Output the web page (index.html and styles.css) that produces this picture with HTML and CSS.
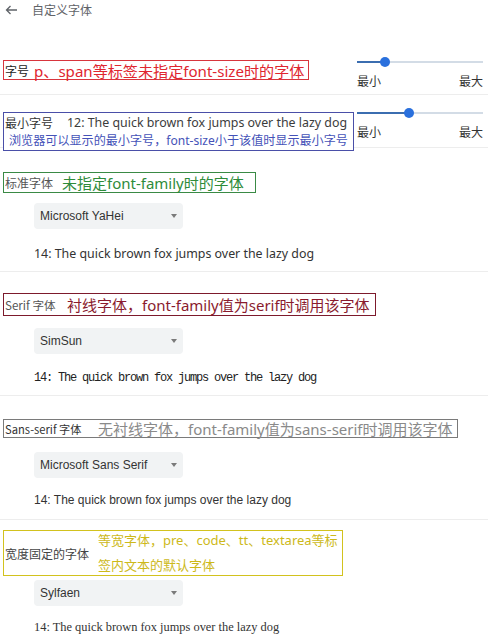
FILE: index.html
```html
<!DOCTYPE html>
<html lang="zh-CN">
<head>
<meta charset="utf-8">
<title>自定义字体</title>
<link rel="stylesheet" href="styles.css">
</head>
<body>
<div class="page">
  <header class="topbar">
    <svg class="back" width="14" height="12" viewBox="0 0 14 12"><path d="M13 6H2.5M6.5 2L2.5 6L6.5 10" fill="none" stroke="#5f6368" stroke-width="1.3"/></svg>
    <span class="title">自定义字体</span>
  </header>

  <section class="row row-size">
    <div class="note note-red">
      <span class="lbl lbl-1">字号</span><span class="desc">p、span等标签未指定font-size时的字体</span>
    </div>
    <div class="slider slider-1">
      <div class="track"><div class="fill" style="width:28px"><span class="knob"></span></div></div>
      <div class="ends"><span>最小</span><span>最大</span></div>
    </div>
  </section>

  <section class="row row-min">
    <div class="note note-blue">
      <div class="line1"><span class="lbl lbl-2">最小字号</span><span class="sample12">12: The quick brown fox jumps over the lazy dog</span></div>
      <div class="line2">浏览器可以显示的最小字号，font-size小于该值时显示最小字号</div>
    </div>
    <div class="slider slider-2">
      <div class="track"><div class="fill" style="width:52px"><span class="knob"></span></div></div>
      <div class="ends"><span>最小</span><span>最大</span></div>
    </div>
  </section>

  <section class="row font-row row-std">
    <div class="note note-green">
      <span class="lbl lbl-3">标准字体</span><span class="desc">未指定font-family时的字体</span>
    </div>
    <div class="select"><span>Microsoft YaHei</span><span class="caret"></span></div>
    <p class="sample sample-yahei">14: The quick brown fox jumps over the lazy dog</p>
  </section>

  <section class="row font-row row-serif">
    <div class="note note-maroon">
      <span class="lbl lbl-4">Serif 字体</span><span class="desc">衬线字体，font-family值为serif时调用该字体</span>
    </div>
    <div class="select"><span>SimSun</span><span class="caret"></span></div>
    <p class="sample sample-simsun">14: The quick brown fox jumps over the lazy dog</p>
  </section>

  <section class="row font-row row-sans">
    <div class="note note-gray">
      <span class="lbl lbl-5">Sans-serif 字体</span><span class="desc">无衬线字体，font-family值为sans-serif时调用该字体</span>
    </div>
    <div class="select"><span>Microsoft Sans Serif</span><span class="caret"></span></div>
    <p class="sample sample-arial">14: The quick brown fox jumps over the lazy dog</p>
  </section>

  <section class="row font-row row-mono">
    <div class="note note-yellow">
      <span class="lbl lbl-6">宽度固定的字体</span><span class="desc">等宽字体，pre、code、tt、textarea等标<br>签内文本的默认字体</span>
    </div>
    <div class="select"><span>Sylfaen</span><span class="caret"></span></div>
    <p class="sample sample-sylfaen">14: The quick brown fox jumps over the lazy dog</p>
  </section>
</div>
</body>
</html>
```

FILE: styles.css
```css
* { box-sizing: border-box; }
html, body { margin: 0; padding: 0; background: #fff; }
body {
  font-family: "Noto Sans", "Noto Sans CJK SC", sans-serif;
  color: #333;
  width: 488px;
  height: 638px;
  overflow: hidden;
}

.topbar {
  display: flex;
  align-items: center;
  height: 19px;
  padding-left: 4px;
  gap: 14px;
}
.back { display: block; }
.title {
  font-family: "Noto Sans CJK SC", sans-serif;
  font-size: 12px;
  color: #5f6368;
  line-height: 19px;
}

.row {
  border-bottom: 1px solid #ededed;
}

/* annotation boxes */
.note {
  position: relative;
  z-index: 1;
  background: #fff;
  margin-left: 3px;
  display: flex;
  align-items: center;
  border: 1px solid;
  padding-left: 1px;
  white-space: nowrap;
}
.lbl {
  font-family: "Noto Sans CJK SC", sans-serif;
  font-size: 12px;
  color: #444;
  flex: none;
}
.desc {
  font-family: "Noto Sans", "Noto Sans CJK SC", sans-serif;
  font-size: 15px;
}

.note-red { width: 306px; height: 20px; margin-top: 9px; border-color: #d8353d; }
.note-red .desc { color: #e0262f; font-size: 15.1px; }
.lbl-1 { width: 29px; color: #222; }

.note-blue {
  width: 351px; height: 39px; margin-top: 17px; border-color: #4a4fa8;
  flex-direction: column; align-items: stretch; padding-left: 1px;
}
.line1 { display: flex; align-items: center; height: 18px; }
.lbl-2 { width: 62px; color: #333; }
.sample12 { font-size: 12.4px; color: #3c3c3c; }
.line2 {
  font-family: "Noto Sans", "Noto Sans CJK SC", sans-serif;
  font-size: 12.1px;
  color: #4452b8;
  line-height: 19px;
  padding-left: 4px;
}

.note-green { width: 253px; height: 21px; margin-top: 24px; border-color: #3a8a45; }
.note-green .desc { color: #2e8b3a; }
.lbl-3 { width: 57px; color: #555; }

.note-maroon { width: 373px; height: 23px; margin-top: 21px; border-color: #7d1a2c; }
.note-maroon .desc { color: #8a1b2e; }
.lbl-4 { width: 62px; color: #555; font-size: 11.6px; }

.note-gray { width: 455px; height: 19px; margin-top: 23px; border-color: #7a7a7a; }
.note-gray .desc { color: #8a8a8a; }
.lbl-5 { width: 93px; color: #333; font-size: 11.2px; }

.note-yellow { width: 340px; height: 46px; margin-top: 10px; border-color: #d2c21e; }
.note-yellow .desc { color: #cdb91a; font-size: 13px; line-height: 25px; margin: -3px 0; }
.lbl-6 { width: 93px; color: #444; }

/* slider rows */
.row-size, .row-min {
  display: flex;
  justify-content: space-between;
  align-items: flex-start;
}
.row-size { margin-top: 32px; height: 44px; }
.row-min { height: 53px; }

.slider { width: 126px; margin-right: 5px; }
.slider-1 { margin-top: 7px; }
.slider-2 { margin-top: 14px; }
.track {
  position: relative;
  height: 8px;
}
.track::before {
  content: "";
  position: absolute;
  left: 0; right: 0; top: 3px;
  height: 2px;
  background: #d3dce6;
}
.fill {
  position: relative;
  top: 3px;
  height: 2px;
  background: #3b6db0;
}
.knob {
  position: absolute;
  right: -5px;
  top: -4px;
  width: 10px;
  height: 10px;
  border-radius: 50%;
  background: #2a70dd;
}
.ends {
  display: flex;
  justify-content: space-between;
  margin-top: 8px;
  font-family: "Noto Sans CJK SC", sans-serif;
  font-size: 12px;
  line-height: 14px;
  color: #333;
}

/* font rows */
.select {
  margin-left: 34px;
  width: 149px;
  height: 26px;
  background: #f1f3f4;
  border-radius: 4px;
  display: flex;
  align-items: center;
  justify-content: space-between;
  padding: 0 6px;
  font-family: "Liberation Sans", sans-serif;
  font-size: 12px;
  color: #333;
}
.caret {
  width: 0; height: 0;
  border-left: 3.5px solid transparent;
  border-right: 3.5px solid transparent;
  border-top: 4px solid #7a7a7a;
}
.sample {
  margin: 0 0 0 34px;
  font-size: 12px;
  line-height: 16px;
  color: #333;
  white-space: nowrap;
}

.row-std .select { margin-top: 10px; }
.row-std .sample { margin-top: 17px; }
.row-std { padding-bottom: 9px; }
.sample-yahei { font-family: "Noto Sans", sans-serif; font-size: 12.4px; }

.row-serif .select { margin-top: 12px; }
.row-serif .sample { margin-top: 16px; }
.row-serif { padding-bottom: 9px; }
.sample-simsun { font-family: "Liberation Mono", monospace; font-size: 12px; letter-spacing: -1.2px; color: #222; }

.row-sans .select { margin-top: 14px; }
.row-sans .sample { margin-top: 14px; }
.row-sans { padding-bottom: 11px; }
.sample-arial { font-family: "Liberation Sans", sans-serif; }

.row-mono { border-bottom: none; }
.row-mono .select { margin-top: 4px; }
.row-mono .sample { margin-top: 13px; }
.sample-sylfaen { font-family: "Liberation Serif", serif; font-size: 12.4px; }
```
